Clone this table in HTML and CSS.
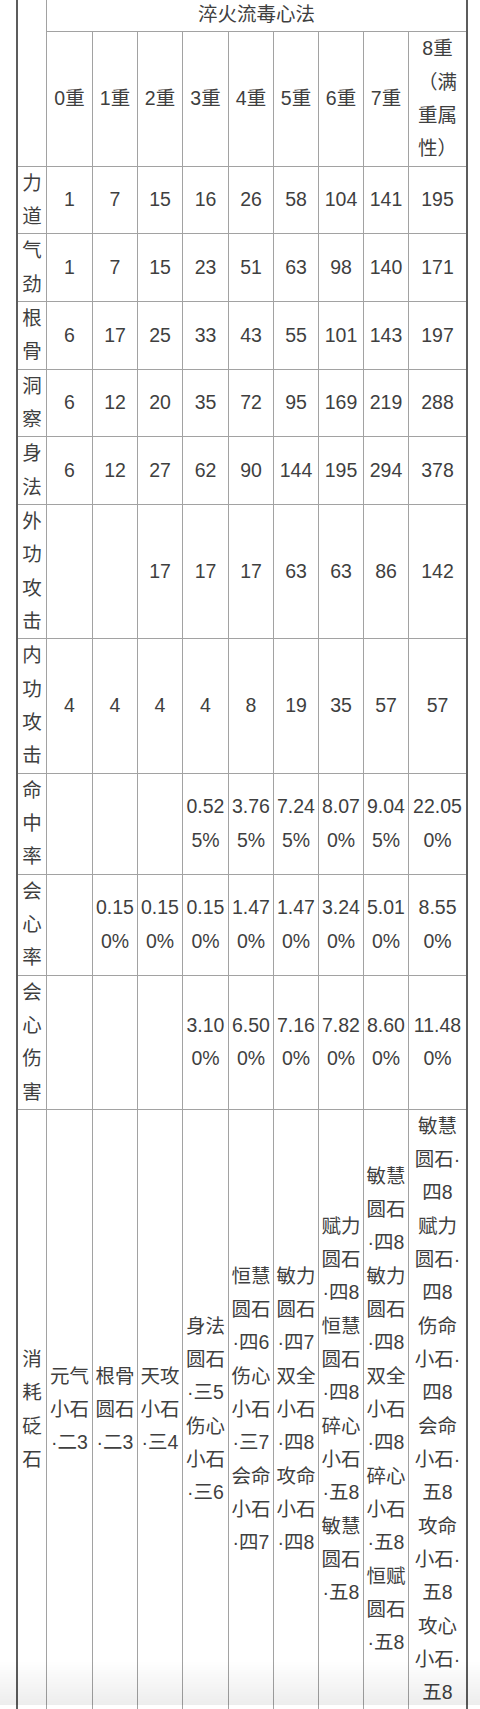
FILE: index.html
```html
<!DOCTYPE html>
<html lang="zh-CN">
<head>
<meta charset="utf-8">
<title>淬火流毒心法</title>
<link rel="stylesheet" href="styles.css">
</head>
<body>
<table class="stats">
  <colgroup>
    <col class="c-label">
    <col class="c-a"><col class="c-b"><col class="c-b"><col class="c-a">
    <col class="c-b"><col class="c-b"><col class="c-b"><col class="c-b">
    <col class="c-last">
  </colgroup>
  <tr>
    <th class="corner" rowspan="2"></th>
    <th class="title" colspan="9">淬火流毒心法</th>
  </tr>
  <tr>
    <th>0重</th><th>1重</th><th>2重</th><th>3重</th><th>4重</th><th>5重</th><th>6重</th><th>7重</th><th>8重（满重属性）</th>
  </tr>
  <tr><th>力道</th><td>1</td><td>7</td><td>15</td><td>16</td><td>26</td><td>58</td><td>104</td><td>141</td><td>195</td></tr>
  <tr><th>气劲</th><td>1</td><td>7</td><td>15</td><td>23</td><td>51</td><td>63</td><td>98</td><td>140</td><td>171</td></tr>
  <tr><th>根骨</th><td>6</td><td>17</td><td>25</td><td>33</td><td>43</td><td>55</td><td>101</td><td>143</td><td>197</td></tr>
  <tr><th>洞察</th><td>6</td><td>12</td><td>20</td><td>35</td><td>72</td><td>95</td><td>169</td><td>219</td><td>288</td></tr>
  <tr><th>身法</th><td>6</td><td>12</td><td>27</td><td>62</td><td>90</td><td>144</td><td>195</td><td>294</td><td>378</td></tr>
  <tr><th>外功攻击</th><td></td><td></td><td>17</td><td>17</td><td>17</td><td>63</td><td>63</td><td>86</td><td>142</td></tr>
  <tr><th>内功攻击</th><td>4</td><td>4</td><td>4</td><td>4</td><td>8</td><td>19</td><td>35</td><td>57</td><td>57</td></tr>
  <tr><th>命中率</th><td></td><td></td><td></td><td>0.52<wbr>5%</td><td>3.76<wbr>5%</td><td>7.24<wbr>5%</td><td>8.07<wbr>0%</td><td>9.04<wbr>5%</td><td>22.05<wbr>0%</td></tr>
  <tr><th>会心率</th><td></td><td>0.15<wbr>0%</td><td>0.15<wbr>0%</td><td>0.15<wbr>0%</td><td>1.47<wbr>0%</td><td>1.47<wbr>0%</td><td>3.24<wbr>0%</td><td>5.01<wbr>0%</td><td>8.55<wbr>0%</td></tr>
  <tr><th>会心伤害</th><td></td><td></td><td></td><td>3.10<wbr>0%</td><td>6.50<wbr>0%</td><td>7.16<wbr>0%</td><td>7.82<wbr>0%</td><td>8.60<wbr>0%</td><td>11.48<wbr>0%</td></tr>
  <tr><th>消耗砭石</th>
    <td>元气小石·二3</td>
    <td>根骨圆石·二3</td>
    <td>天攻小石·三4</td>
    <td>身法圆石·三5伤心小石·三6</td>
    <td>恒慧圆石·四6伤心小石·三7会命小石·四7</td>
    <td>敏力圆石·四7双全小石·四8攻命小石·四8</td>
    <td>赋力圆石·四8恒慧圆石·四8碎心小石·五8敏慧圆石·五8</td>
    <td>敏慧圆石·四8敏力圆石·四8双全小石·四8碎心小石·五8恒赋圆石·五8</td>
    <td>敏慧圆石·四8赋力圆石·四8伤命小石·四8会命小石·五8攻命小石·五8攻心小石·五8</td>
  </tr>
  <tr class="more"><th></th><td></td><td></td><td></td><td></td><td></td><td></td><td></td><td></td><td></td></tr>
</table>
<div class="bottom-fade"></div>
</body>
</html>
```

FILE: styles.css
```css
html, body {
  margin: 0;
  padding: 0;
  background: #ffffff;
}

body {
  font-family: "Liberation Sans", "Noto Sans CJK SC", sans-serif;
  color: #3f3f3f;
}

.stats {
  margin: -4px 0 0 16px;
  border-collapse: collapse;
  table-layout: fixed;
  width: 450px;
  border: 2px solid #5c5c5c;
}

.c-label { width: 29.5px; }
.c-a { width: 46px; }
.c-b { width: 45px; }
.c-last { width: 58.5px; }

.stats th,
.stats td {
  border: 1px solid #a2a2a2;
  padding: 0 2px;
  font-size: 19.5px;
  line-height: 33.33px;
  font-weight: normal;
  text-align: center;
  vertical-align: middle;
}

.stats td:last-child,
.stats tr:nth-child(2) th:last-child {
  padding: 0 3.85px;
}

.stats .more th,
.stats .more td {
  height: 33px;
}

.bottom-fade {
  position: fixed;
  left: 0;
  right: 0;
  bottom: 4px;
  height: 44px;
  background: linear-gradient(to bottom, rgba(0, 0, 0, 0), rgba(0, 0, 0, 0.07));
  pointer-events: none;
}
```
